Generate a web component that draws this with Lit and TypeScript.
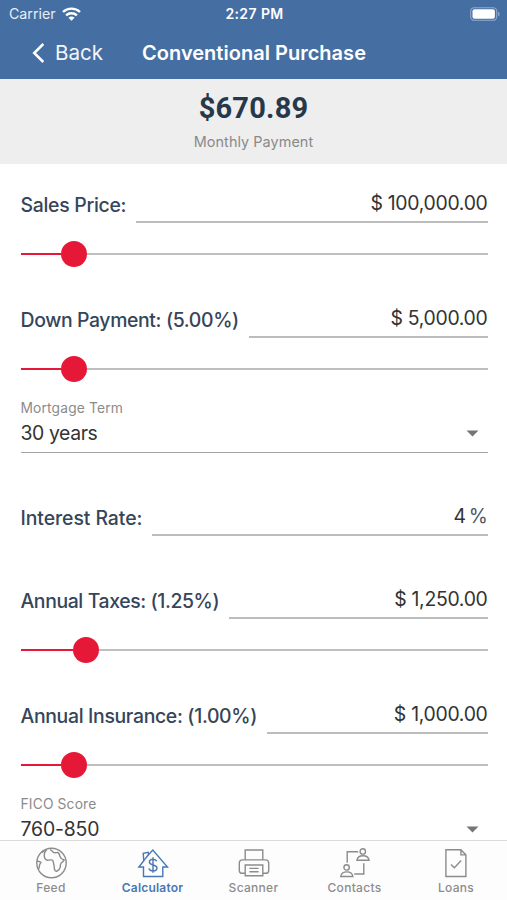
import { LitElement, html, css, svg, nothing } from "lit";
import { customElement, property } from "lit/decorators.js";
import { classMap } from "lit/directives/class-map.js";

@customElement("amount-row")
class AmountRow extends LitElement {
  @property() label = "";
  @property() value = "";
  @property() unit = "";

  static styles = css`
    :host { display: flex; height: 40px; gap: 10px; }
    .label { flex: none; font-weight: 500; font-size: 19.4px; line-height: 45px; color: #35455a; letter-spacing: var(--label-spacing, 0px); white-space: nowrap; }
    .field { flex: 1; box-sizing: border-box; border-bottom: 2px solid #bcbcbc; text-align: right; font-size: 19.4px; line-height: 41px; color: #333; white-space: nowrap; letter-spacing: -0.3px; }
    .unit { color: #4a5868; margin-left: 3px; }
  `;

  render() {
    return html`<span class="label">${this.label}</span>
      <div class="field">${this.value}${this.unit ? html`<span class="unit">${this.unit}</span>` : nothing}</div>`;
  }
}

@customElement("range-slider")
class RangeSlider extends LitElement {
  @property({ type: Number }) percent = 0;

  static styles = css`
    :host { display: flex; align-items: center; height: 26px; margin-top: 18px; }
    .done { height: 2.5px; background: #e51937; }
    .knob { width: 26px; height: 26px; border-radius: 50%; background: #e51937; flex: none; }
    .rest { height: 2.5px; background: #bfbfbf; flex: 1; }
  `;

  render() {
    return html`<div class="done" style="width:calc(${this.percent}% - 13px)"></div>
      <div class="knob"></div>
      <div class="rest"></div>`;
  }
}

@customElement("select-field")
class SelectField extends LitElement {
  @property() label = "";
  @property() value = "";

  static styles = css`
    :host { display: block; height: 53px; box-sizing: border-box; border-bottom: 1.5px solid #a4a4a4; }
    .label { font-size: 13.8px; line-height: 16px; color: #8b8b8b; letter-spacing: 0.15px; }
    .line { display: flex; align-items: center; justify-content: space-between; height: 34px; font-size: 19.4px; color: #333; padding-right: 8.5px; letter-spacing: var(--value-spacing, -0.4px); }
    svg { display: block; }
  `;

  render() {
    return html`<div class="label">${this.label}</div>
      <div class="line"><span>${this.value}</span>
        <svg width="13" height="7" viewBox="0 0 13 7"><path d="M.5.5h12L6.5 6.5z" fill="#757575" /></svg>
      </div>`;
  }
}

const icons = {
  feed: svg`<circle cx="16.5" cy="16" r="14.7"/><path d="M11.7 2.5c-1.7 1.8-2.7 4-2.4 6.6.2 2.2 1.4 3.9 3.4 4.1 1.8-.3 3.7-.8 4.9.1 1 1.2.7 3 1.4 4.7l.5 4.3c.5 1.6 1.3 2.3 2.6 1.7 1.7-.7 2.8-2.4 3.2-4.2-.1-1.5-.1-2.7.8-3.7 1.3-1.2 2.5-1.8 3-3.1-1.9-.3-3.3-1.4-4-3.2-.4-1.9-1.1-3.5-2-4.2-1.7-.3-3.2.6-4.7-.3-1.1-1.1-1.8-2.3-3.3-2.6M2 14c1.5 0 2.3.8 3.9 1.3-.2 1.2-1.3 1.8-1.4 3.1 0 1.3-.3 2.4-1.1 3.5M9.4 3.5L7 5.6"/>`,
  calculator: svg`<path d="M6.5 29.5V20H1.8l5-6.3-.6-7.3 5-1.1.4 2.3L15.8 3l14.7 17h-4.7v9.5z"/><path d="M11.4 7.7L7 13.4M19.8 14.3c-.6-1.4-1.9-2.1-3.7-2.1-2.2 0-3.7 1-3.7 2.8 0 4 7.6 2 7.6 5.9 0 1.8-1.6 2.9-3.9 2.9-2 0-3.6-.8-4.2-2.4M16 10.2v15.6"/>`,
  scanner: svg`<path d="M7.2 13V3h17.6v10M7.2 26.3H4.4c-1.9 0-3.1-1.1-3.1-2.9v-7.2c0-2 1.3-3.3 3.2-3.3h23c1.9 0 3.2 1.3 3.2 3.3v7.2c0 1.8-1.2 2.9-3.1 2.9h-2.8M7.2 18h17.6v10.8H7.2zM11.4 21.4h9.2M11.4 24.7h9.2"/>`,
  contacts: svg`<path d="M8.2 15.7v-11h11M24.8 16.3V27h-9.6"/><circle cx="23.8" cy="4.4" r="2.7"/><path d="M17.9 13.3c.5-3.2 2.8-4.6 6.1-4.6s5.6 1.4 6.1 4.6z"/><circle cx="7.6" cy="20.4" r="2.7"/><path d="M1.7 29.5c.5-3.2 2.8-4.6 6.1-4.6s5.6 1.4 6.1 4.6z"/>`,
  loans: svg`<path d="M5.9 2.7h15l5 5.2v21.6h-20zM20.9 2.9v5h4.9M11 17.4l3.4 3.4 6.8-7.3"/>`,
};

const tabs = [
  { name: "Feed", icon: icons.feed, width: 102 },
  { name: "Calculator", icon: icons.calculator, width: 101, active: true },
  { name: "Scanner", icon: icons.scanner, width: 101 },
  { name: "Contacts", icon: icons.contacts, width: 101 },
  { name: "Loans", icon: icons.loans, width: 102 },
];

@customElement("app-root")
class AppRoot extends LitElement {
  static styles = css`
    :host { display: flex; flex-direction: column; height: 900px; overflow: hidden; background: #fff; font-family: Inter, "Liberation Sans", sans-serif; }
    header { flex: none; height: 79px; background: #456fa3; color: #fff; }
    .status { display: grid; grid-template-columns: 1fr auto 1fr; align-items: center; height: 27px; font-size: 14.2px; padding: 0 7px 0 9px; }
    .carrier { display: flex; align-items: center; gap: 6px; color: #e8eef6; }
    .clock { font-weight: 600; font-size: 14px; letter-spacing: 0.4px; }
    .battery { justify-self: end; }
    svg { display: block; fill: none; }
    .nav { display: grid; grid-template-columns: 142px auto 1fr; align-items: center; height: 51px; }
    .back { display: flex; align-items: center; gap: 10px; padding-left: 32px; font-size: 20.6px; color: #f1f5fa; }
    .title { font-weight: 600; font-size: 20px; white-space: nowrap; letter-spacing: 0.02px; }
    .summary { flex: none; height: 84.5px; background: #eee; text-align: center; }
    .total { font: 700 29px/36px Roboto, sans-serif; color: #26384c; letter-spacing: 0.2px; padding-top: 11px; }
    .caption { font-size: 14.4px; line-height: 20px; padding-top: 5.5px; color: #8a8a8a; letter-spacing: 0.07px; }
    main { flex: 1; min-height: 0; overflow: hidden; padding: 19.5px 19.5px 0 20.5px; }
    .spaced { margin-top: 31px; }
    .term { margin-top: 18px; }
    .rate, .taxes { margin-top: 43px; }
    .sales { --label-spacing: -0.27px; }
    .down { --label-spacing: -0.36px; }
    .rate { --label-spacing: -0.06px; }
    .taxes { --label-spacing: -0.38px; }
    .insurance { --label-spacing: -0.32px; }
    .fico { --value-spacing: -0.15px; }
    footer { flex: none; display: flex; height: 60px; box-sizing: border-box; border-top: 1px solid #dcdcdc; background: #fdfdfd; }
    .tab { display: flex; flex-direction: column; align-items: center; padding-top: 6px; color: #8c8c8c; font-size: 12px; font-weight: 500; line-height: 17px; letter-spacing: 0.3px; }
    .tab svg { stroke: currentColor; stroke-width: 1.4; }
    .active { color: #4878b5; font-weight: 600; letter-spacing: 0.2px; }
  `;

  render() {
    return html`
      <header>
        <div class="status">
          <div class="carrier"><span>Carrier</span>
            <svg width="19" height="14" viewBox="0 0 19 14"><g stroke="#fff" stroke-width="2.4"><path d="M1 5C5.7.5 13.3.5 18 5"/><path d="M4.1 8.3c3-2.8 7.8-2.8 10.8 0"/></g><path d="M6.5 10.8c1.7-1.6 4.3-1.6 6 0l-3 3z" fill="#fff"/></svg>
          </div>
          <div class="clock">2:27 PM</div>
          <svg class="battery" width="30" height="14" viewBox="0 0 30 14"><rect x=".7" y=".7" width="26" height="12.6" rx="3.6" stroke="#8fabcd" stroke-width="1.1"/><rect x="2.5" y="2.3" width="22.4" height="9.4" rx="2" fill="#fff"/><path d="M28.1 4.7c2 .6 2 4 0 4.6z" fill="#8fabcd"/></svg>
        </div>
        <div class="nav">
          <div class="back"><svg width="13" height="20" viewBox="0 0 13 20"><path d="M11.3 1L2.2 10l9.1 9" stroke="#fff" stroke-width="2.5"/></svg><span>Back</span></div>
          <div class="title">Conventional Purchase</div>
        </div>
      </header>
      <section class="summary">
        <div class="total">$670.89</div>
        <div class="caption">Monthly Payment</div>
      </section>
      <main>
        <amount-row class="sales" label="Sales Price:" value="$ 100,000.00"></amount-row>
        <range-slider percent="11.5"></range-slider>
        <amount-row class="spaced down" label="Down Payment: (5.00%)" value="$ 5,000.00"></amount-row>
        <range-slider percent="11.5"></range-slider>
        <select-field class="term" label="Mortgage Term" value="30 years"></select-field>
        <amount-row class="rate" label="Interest Rate:" value="4" unit="%"></amount-row>
        <amount-row class="taxes" label="Annual Taxes: (1.25%)" value="$ 1,250.00"></amount-row>
        <range-slider percent="13.95"></range-slider>
        <amount-row class="spaced insurance" label="Annual Insurance: (1.00%)" value="$ 1,000.00"></amount-row>
        <range-slider percent="11.5"></range-slider>
        <select-field class="term fico" label="FICO Score" value="760-850"></select-field>
      </main>
      <footer>
        ${tabs.map((t) => html`<div class=${classMap({ tab: true, active: !!t.active })} style="width:${t.width}px">
          <svg width="32" height="32" viewBox="0 0 32 32">${t.icon}</svg><span>${t.name}</span>
        </div>`)}
      </footer>`;
  }
}
